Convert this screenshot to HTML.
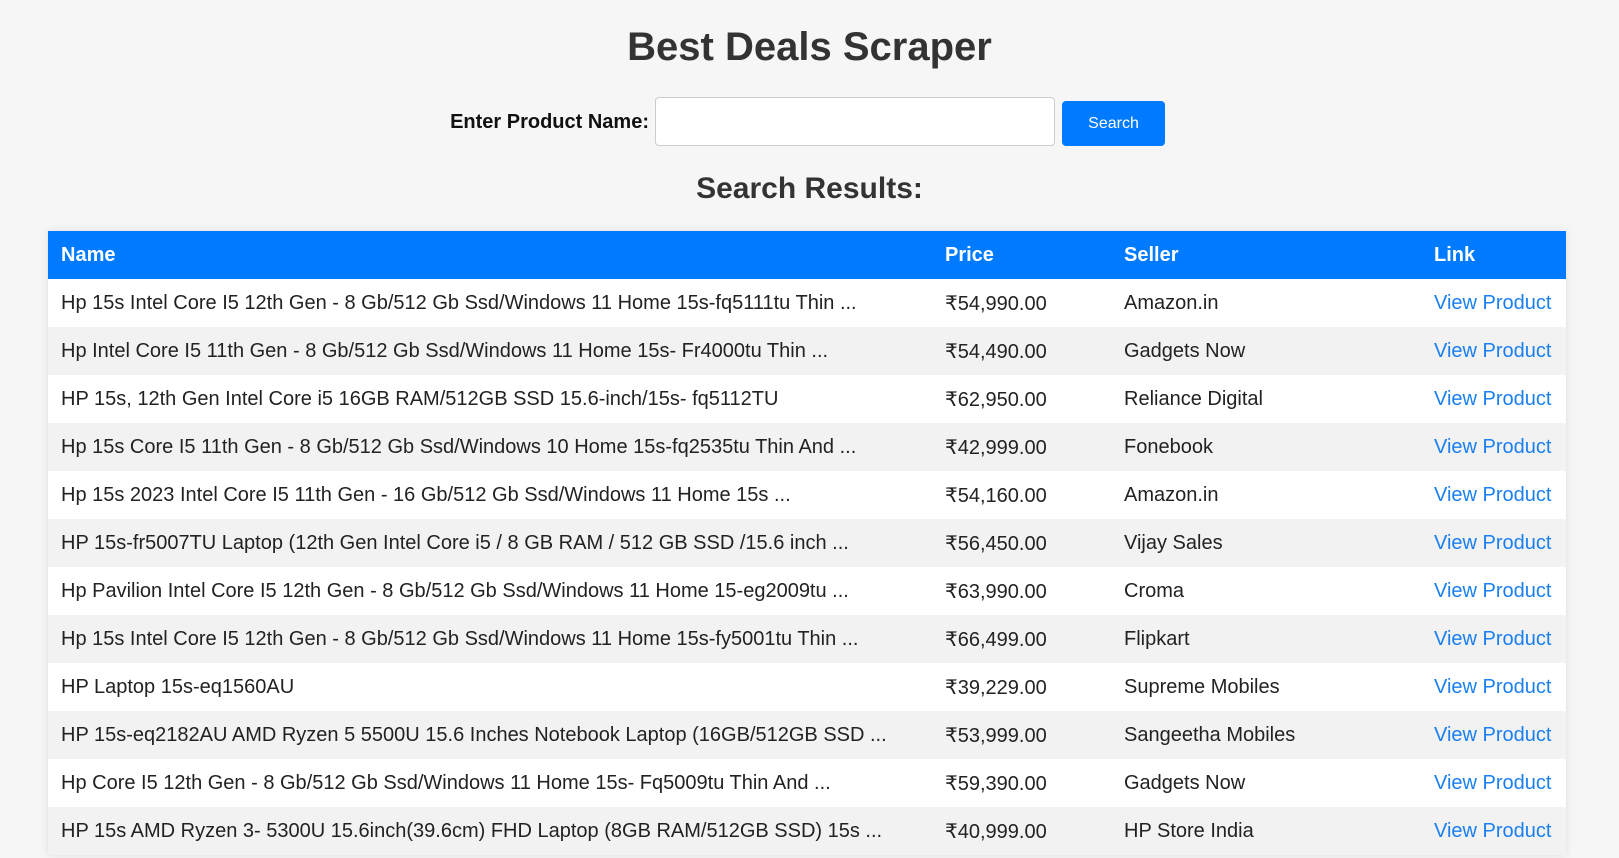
<!DOCTYPE html>
<html><head><meta charset="utf-8"><style>
html,body{margin:0;padding:0;background:#f6f6f6;font-family:"Liberation Sans",Arial,sans-serif;width:1619px;height:858px;overflow:hidden;position:relative}
h1{position:absolute;left:0;width:1619px;top:24px;margin:0;text-align:center;font-size:40px;line-height:46px;color:#333;font-weight:bold}
.lbl{position:absolute;left:380px;width:269px;text-align:right;top:110px;font-size:20px;font-weight:bold;color:#111;line-height:24px}
.inp{position:absolute;left:655px;top:97px;width:400px;height:49px;box-sizing:border-box;border:1px solid #ccc;border-radius:4px;background:#fff}
.btn{position:absolute;left:1062px;top:101px;width:103px;height:45px;background:#007bff;color:#fff;border-radius:4px;font-size:16px;line-height:45px;text-align:center}
h2{position:absolute;left:0;width:1619px;top:171px;margin:0;text-align:center;font-size:30px;line-height:35px;color:#333}
table{position:absolute;left:48px;top:231px;width:1518px;border-collapse:collapse;table-layout:fixed;box-shadow:0 0 8px rgba(0,0,0,0.1);font-size:20px;color:#222}
th{background:#007bff;color:#fff;text-align:left;height:48px;padding:0 0 0 13px;font-size:20px}
td{height:48px;padding:0 0 0 13px;white-space:nowrap;overflow:hidden}
tr:nth-child(odd) td{background:#fff}
tr:nth-child(even) td{background:#f2f2f2}
a{color:#1a7ff0;text-decoration:none}
</style></head><body>
<h1>Best Deals Scraper</h1>
<div class="lbl">Enter Product Name:</div>
<div class="inp"></div>
<div class="btn">Search</div>
<h2>Search Results:</h2>
<table>
<colgroup><col style="width:884px"><col style="width:179px"><col style="width:310px"><col style="width:145px"></colgroup>
<thead><tr><th>Name</th><th>Price</th><th>Seller</th><th>Link</th></tr></thead>
<tbody>
<tr><td>Hp 15s Intel Core I5 12th Gen - 8 Gb/512 Gb Ssd/Windows 11 Home 15s-fq5111tu Thin ...</td><td>₹54,990.00</td><td>Amazon.in</td><td><a>View Product</a></td></tr>
<tr><td>Hp Intel Core I5 11th Gen - 8 Gb/512 Gb Ssd/Windows 11 Home 15s- Fr4000tu Thin ...</td><td>₹54,490.00</td><td>Gadgets Now</td><td><a>View Product</a></td></tr>
<tr><td>HP 15s, 12th Gen Intel Core i5 16GB RAM/512GB SSD 15.6-inch/15s- fq5112TU</td><td>₹62,950.00</td><td>Reliance Digital</td><td><a>View Product</a></td></tr>
<tr><td>Hp 15s Core I5 11th Gen - 8 Gb/512 Gb Ssd/Windows 10 Home 15s-fq2535tu Thin And ...</td><td>₹42,999.00</td><td>Fonebook</td><td><a>View Product</a></td></tr>
<tr><td>Hp 15s 2023 Intel Core I5 11th Gen - 16 Gb/512 Gb Ssd/Windows 11 Home 15s ...</td><td>₹54,160.00</td><td>Amazon.in</td><td><a>View Product</a></td></tr>
<tr><td>HP 15s-fr5007TU Laptop (12th Gen Intel Core i5 / 8 GB RAM / 512 GB SSD /15.6 inch ...</td><td>₹56,450.00</td><td>Vijay Sales</td><td><a>View Product</a></td></tr>
<tr><td>Hp Pavilion Intel Core I5 12th Gen - 8 Gb/512 Gb Ssd/Windows 11 Home 15-eg2009tu ...</td><td>₹63,990.00</td><td>Croma</td><td><a>View Product</a></td></tr>
<tr><td>Hp 15s Intel Core I5 12th Gen - 8 Gb/512 Gb Ssd/Windows 11 Home 15s-fy5001tu Thin ...</td><td>₹66,499.00</td><td>Flipkart</td><td><a>View Product</a></td></tr>
<tr><td>HP Laptop 15s-eq1560AU</td><td>₹39,229.00</td><td>Supreme Mobiles</td><td><a>View Product</a></td></tr>
<tr><td>HP 15s-eq2182AU AMD Ryzen 5 5500U 15.6 Inches Notebook Laptop (16GB/512GB SSD ...</td><td>₹53,999.00</td><td>Sangeetha Mobiles</td><td><a>View Product</a></td></tr>
<tr><td>Hp Core I5 12th Gen - 8 Gb/512 Gb Ssd/Windows 11 Home 15s- Fq5009tu Thin And ...</td><td>₹59,390.00</td><td>Gadgets Now</td><td><a>View Product</a></td></tr>
<tr><td>HP 15s AMD Ryzen 3- 5300U 15.6inch(39.6cm) FHD Laptop (8GB RAM/512GB SSD) 15s ...</td><td>₹40,999.00</td><td>HP Store India</td><td><a>View Product</a></td></tr>
</tbody></table>
</body></html>
